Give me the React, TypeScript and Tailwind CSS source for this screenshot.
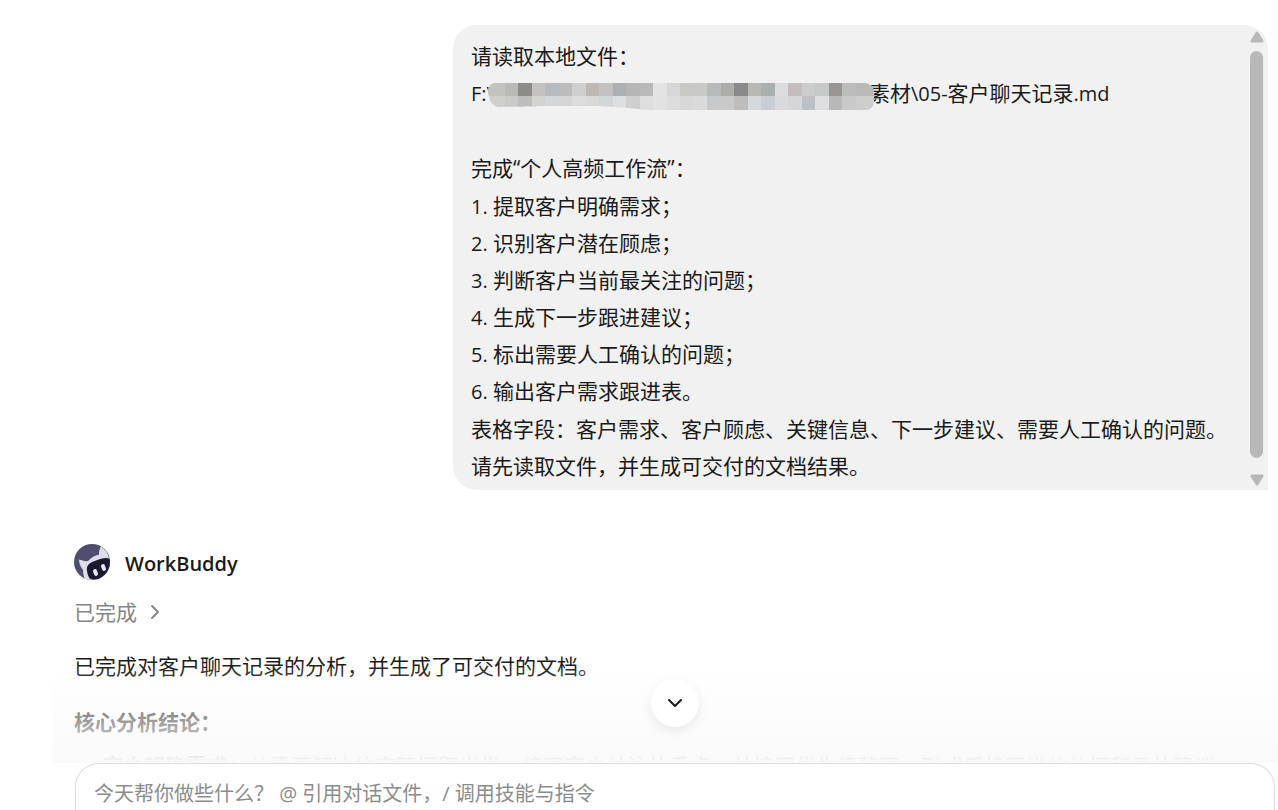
import React, { useState } from 'react';
import { ChevronDown, ChevronRight } from 'lucide-react';

const steps = [
  '提取客户明确需求；',
  '识别客户潜在顾虑；',
  '判断客户当前最关注的问题；',
  '生成下一步跟进建议；',
  '标出需要人工确认的问题；',
  '输出客户需求跟进表。',
];

// Mosaic over the private part of the path, two rows of tiles
const mosaicTop = [
  '#c2c2c1', '#b9b9b9', '#8b8b8a', '#c3c2c1', '#b6bbc0', '#bcbcbc', '#cfcfcf', '#bfb9b6', '#c2c3c1', '#adb0b3',
  '#b6b6b6', '#b9b9b9', '#e3e3e3', '#d6d7d6', '#c8c8c4', '#c9c9c8', '#b8b9ba', '#adadac', '#8a8a8a', '#b8b9b4',
  '#aab0b0', '#dadcde', '#c4bdbd', '#cacdcc', '#c6c9c8', '#989594', '#bcbcbc', '#b9b9b8',
];
const mosaicBottom = [
  '#cfcfcd', '#c9c9c9', '#bdbdbd', '#d2d2d1', '#d4d7da', '#d6d6d6', '#dcdcdc', '#d9d9d8', '#d3d6d7', '#dcdedf',
  '#cfcfcf', '#dedede', '#e2e2e2', '#dcdddd', '#d8d8d8', '#dadada', '#c8c9ca', '#c9c9c9', '#bdbdbe', '#d6d9dc',
  '#c8ced3', '#d9dadb', '#d6d6d8', '#bcc1c6', '#dedee0', '#b8b8b8', '#c9c9c9', '#cfcdcc',
];

const Mosaic: React.FC = () => (
  <svg className="relative -mx-1.5 mt-1.5 h-[27px] w-[387px] shrink-0" viewBox="0 0 387 27" preserveAspectRatio="none" aria-hidden="true">
    <clipPath id="brush">
      <path d="M6 0H377C384 1 387 6 387 13C387 20 385 26 379 27H161L140 25L112 23L60 23L10 24C4 22 1 18 0 8C0 4 2 1 6 0Z" />
    </clipPath>
    <g clipPath="url(#brush)" shapeRendering="crispEdges">
      {mosaicTop.map((c, i) => (
        <rect key={i} x={i * 13.5 + 3 - (i === 0 ? 3 : 0)} y="0" width="18" height="13" fill={c} />
      ))}
      {mosaicBottom.map((c, i) => (
        <rect key={i} x={i * 13.5 + 3 - (i === 0 ? 3 : 0)} y="13" width="18" height="14" fill={c} />
      ))}
    </g>
  </svg>
);

const Avatar: React.FC = () => (
  <svg className="size-9 shrink-0" viewBox="0 0 36 36" aria-hidden="true">
    <clipPath id="face">
      <circle cx="18" cy="18" r="18" />
    </clipPath>
    <g clipPath="url(#face)">
      <rect width="36" height="36" fill="#4f4e6e" />
      <path d="M5 15.5C8 16.5 11 17.5 14 17C17 13.5 21 11.5 25 10.5C25 7 25.5 4.5 27 2.5C31 5 34 9 35 14L37 25V37H12C10 34 9 30 9 26C6.500 23 5 19 5 15.500Z" fill="#dddde9" />
      <path d="M13 27C12 21 16 18.500 22 16.500C27 14.500 32 13 35 14.500C39 17 39 26 34 30C29 34.500 21 37 16.500 35C14 33.500 13.500 30 13 27Z" fill="#191a30" />
      <rect x="19.500" y="25" width="4" height="7" rx="2" fill="#e9e9f3" transform="rotate(-20 21.500 28.500)" />
      <rect x="27.500" y="20" width="4" height="7" rx="2" fill="#e9e9f3" transform="rotate(-20 29.500 23.500)" />
    </g>
  </svg>
);

const ScrollRail: React.FC = () => (
  <div className="flex w-[23px] shrink-0 flex-col items-center pb-1 pt-1.5" aria-hidden="true">
    <svg className="h-3 w-4" viewBox="0 0 16 12">
      <path d="M8 2L13 10H3Z" fill="#b8b8b8" stroke="#b8b8b8" strokeWidth="3" strokeLinejoin="round" />
    </svg>
    <div className="mb-4 mt-2 w-[13px] flex-1 rounded-full bg-[#b8b8b8]" />
    <svg className="h-3 w-4" viewBox="0 0 16 12">
      <path d="M8 10L13 2H3Z" fill="#b8b8b8" stroke="#b8b8b8" strokeWidth="3" strokeLinejoin="round" />
    </svg>
  </div>
);

// Latin letters and digits run one size smaller than the Chinese text
const Latin: React.FC<{ children: React.ReactNode }> = ({ children }) => (
  <span className="text-[20px] leading-none">{children}</span>
);

const App: React.FC = () => {
  const [draft, setDraft] = useState('');

  return (
    <div lang="zh-CN" className="flex h-screen flex-col overflow-hidden bg-white font-['Open_Sans','Noto_Sans_CJK_SC',sans-serif] text-[21px] text-[#1a1a1a]">
      <main className="relative min-h-0 flex-1 overflow-hidden pt-[25px]">
        {/* User message */}
        <section className="ml-auto mr-[10px] flex w-[815px] max-w-full rounded-3xl rounded-br-none bg-[#f1f1f1]">
          <div className="min-w-0 flex-1 pb-[5px] pl-[18px] pt-[13px] leading-[37px]">
            <p>请读取本地文件：</p>
            <p className="flex items-center whitespace-nowrap">
              <span><Latin>F:\</Latin></span>
              <Mosaic />
              <span>素材<Latin>\05-</Latin>客户聊天记录<Latin>.md</Latin></span>
            </p>
            <p className="mt-[38px]">完成“个人高频工作流”：</p>
            <ol className="my-px">
              {steps.map((step, i) => (
                <li key={step}><Latin>{i + 1}. </Latin>{step}</li>
              ))}
            </ol>
            <p>表格字段：客户需求、客户顾虑、关键信息、下一步建议、需要人工确认的问题。</p>
            <p>请先读取文件，并生成可交付的文档结果。</p>
          </div>
          <ScrollRail />
        </section>

        {/* Assistant reply */}
        <article className="mt-[54px] pl-[74px] pr-10">
          <header className="flex items-center gap-[15px]">
            <Avatar />
            <h2 className="pt-1 text-[20px] font-semibold leading-8">WorkBuddy</h2>
          </header>
          <button className="mt-4 flex items-center gap-1.5 leading-8 text-[#858585]">
            已完成
            <ChevronRight className="size-6" />
          </button>
          <p className="mt-[22px] leading-8">已完成对客户聊天记录的分析，并生成了可交付的文档。</p>
          <h3 className="mt-6 font-bold leading-8">核心分析结论：</h3>
          <ul className="mt-3 pl-7 leading-8">
            <li className="whitespace-nowrap">
              <strong>客户明确需求：</strong>从需要解决的实际问题出发，梳理客户关注的重点，并按照优先级整理，形成后续跟进的依据和具体建议
            </li>
          </ul>
        </article>

        <div className="pointer-events-none absolute bottom-0 left-[53px] right-0 h-[100px] bg-linear-to-b from-[#fafafa]/0 to-[#fafafa]" />
        <div className="pointer-events-none absolute bottom-9 left-[75px] right-[3px] flex justify-center">
          <button
            aria-label="滚动到底部"
            className="pointer-events-auto flex size-12 items-center justify-center rounded-full bg-white shadow-[0_4px_12px_rgba(0,0,0,0.08)]"
          >
            <ChevronDown className="size-6" />
          </button>
        </div>
      </main>

      {/* Composer */}
      <form className="ml-[75px] mr-[3px] shrink-0 rounded-t-3xl border border-b-0 border-[#dcdcdc] bg-white px-[18px] pt-4">
        <textarea
          rows={1}
          value={draft}
          onChange={(e) => setDraft(e.target.value)}
          aria-label="消息"
          placeholder="今天帮你做些什么？ @ 引用对话文件，/ 调用技能与指令"
          className="block h-[30px] w-full resize-none overflow-hidden text-[20px] leading-7 outline-none placeholder:text-[#8c8c8c]"
        />
      </form>
    </div>
  );
};

export default App;
